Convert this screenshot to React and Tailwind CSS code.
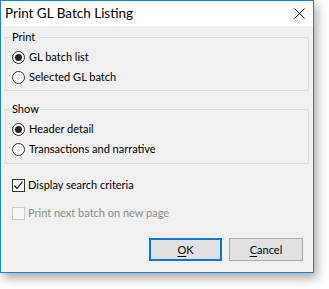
const FONT = { fontFamily: 'Lato, "Liberation Sans", sans-serif' };

function Radio({ checked, label }) {
	return (
		<div className="flex items-center h-[20px] pl-[6px]">
			<span className="w-[13px] h-[13px] rounded-full border border-[#333] bg-white flex items-center justify-center">
				{checked && <span className="w-[7px] h-[7px] rounded-full bg-[#222]" />}
			</span>
			<span className="ml-[4px]">{label}</span>
		</div>
	);
}

function Check({ checked, disabled, label }) {
	return (
		<div className="flex items-center h-[20px] pl-[11px]">
			<span
				className={
					disabled
						? "w-[13px] h-[13px] border border-[#cccccc] bg-[#f7f7f7]"
						: "w-[13px] h-[13px] border border-[#333] bg-white flex items-center justify-center"
				}>
				{checked && (
					<svg width="11" height="11" viewBox="0 0 11 11">
						<path d="M1.5 5.5 L4 8.5 L9.5 1.5" fill="none" stroke="#222" strokeWidth="1.2" />
					</svg>
				)}
			</span>
			<span className={disabled ? "ml-[3px] text-[#8d8d8d]" : "ml-[3px]"}>{label}</span>
		</div>
	);
}

function Group({ title, children, className }) {
	return (
		<fieldset className={"mx-[4px] border border-[#dcdcdc] pb-[3px] pt-[2px] " + className}>
			<legend className="ml-[5px] px-[1px] leading-[16px]">{title}</legend>
			{children}
		</fieldset>
	);
}

export default function App() {
	return (
		<div className="w-[329px] h-[289px] bg-white text-[11px] text-black" style={FONT}>
			<div className="w-[314px] h-[273px] border border-[#1883d7] bg-[#f0f0f0] flex flex-col shadow-[3px_5px_10px_rgba(0,0,0,0.35)]">
				{/* Title bar */}
				<div className="h-[25px] bg-white flex items-center justify-between pl-[4px] pr-[8px]">
					<span className="text-[13.5px]">Print GL Batch Listing</span>
					<svg width="11" height="11" viewBox="0 0 11 11">
						<path d="M0.5 0.5 L10.5 10.5 M10.5 0.5 L0.5 10.5" stroke="#111" strokeWidth="1" />
					</svg>
				</div>

				<div className="flex flex-col pt-[3px] leading-[16px]">
					<Group title="Print">
						<Radio checked label="GL batch list" />
						<Radio label="Selected GL batch" />
					</Group>

					<Group title="Show" className="mt-[10px] pb-[4px]">
						<Radio checked label="Header detail" />
						<Radio label="Transactions and narrative" />
					</Group>

					<div className="mt-[11px]">
						<Check checked label="Display search criteria" />
					</div>
					<div className="mt-[8px]">
						<Check disabled label="Print next batch on new page" />
					</div>

					{/* Buttons */}
					<div className="flex justify-end gap-[7px] pr-[10px] mt-[15px]">
						<button className="w-[73px] h-[23px] bg-[#e1e1e1] border-2 border-[#0078d7]">
							<span className="underline underline-offset-2">O</span>K
						</button>
						<button className="w-[74px] h-[23px] bg-[#e1e1e1] border border-[#adadad]">
							<span className="underline underline-offset-2">C</span>ancel
						</button>
					</div>
				</div>
			</div>
		</div>
	);
}
